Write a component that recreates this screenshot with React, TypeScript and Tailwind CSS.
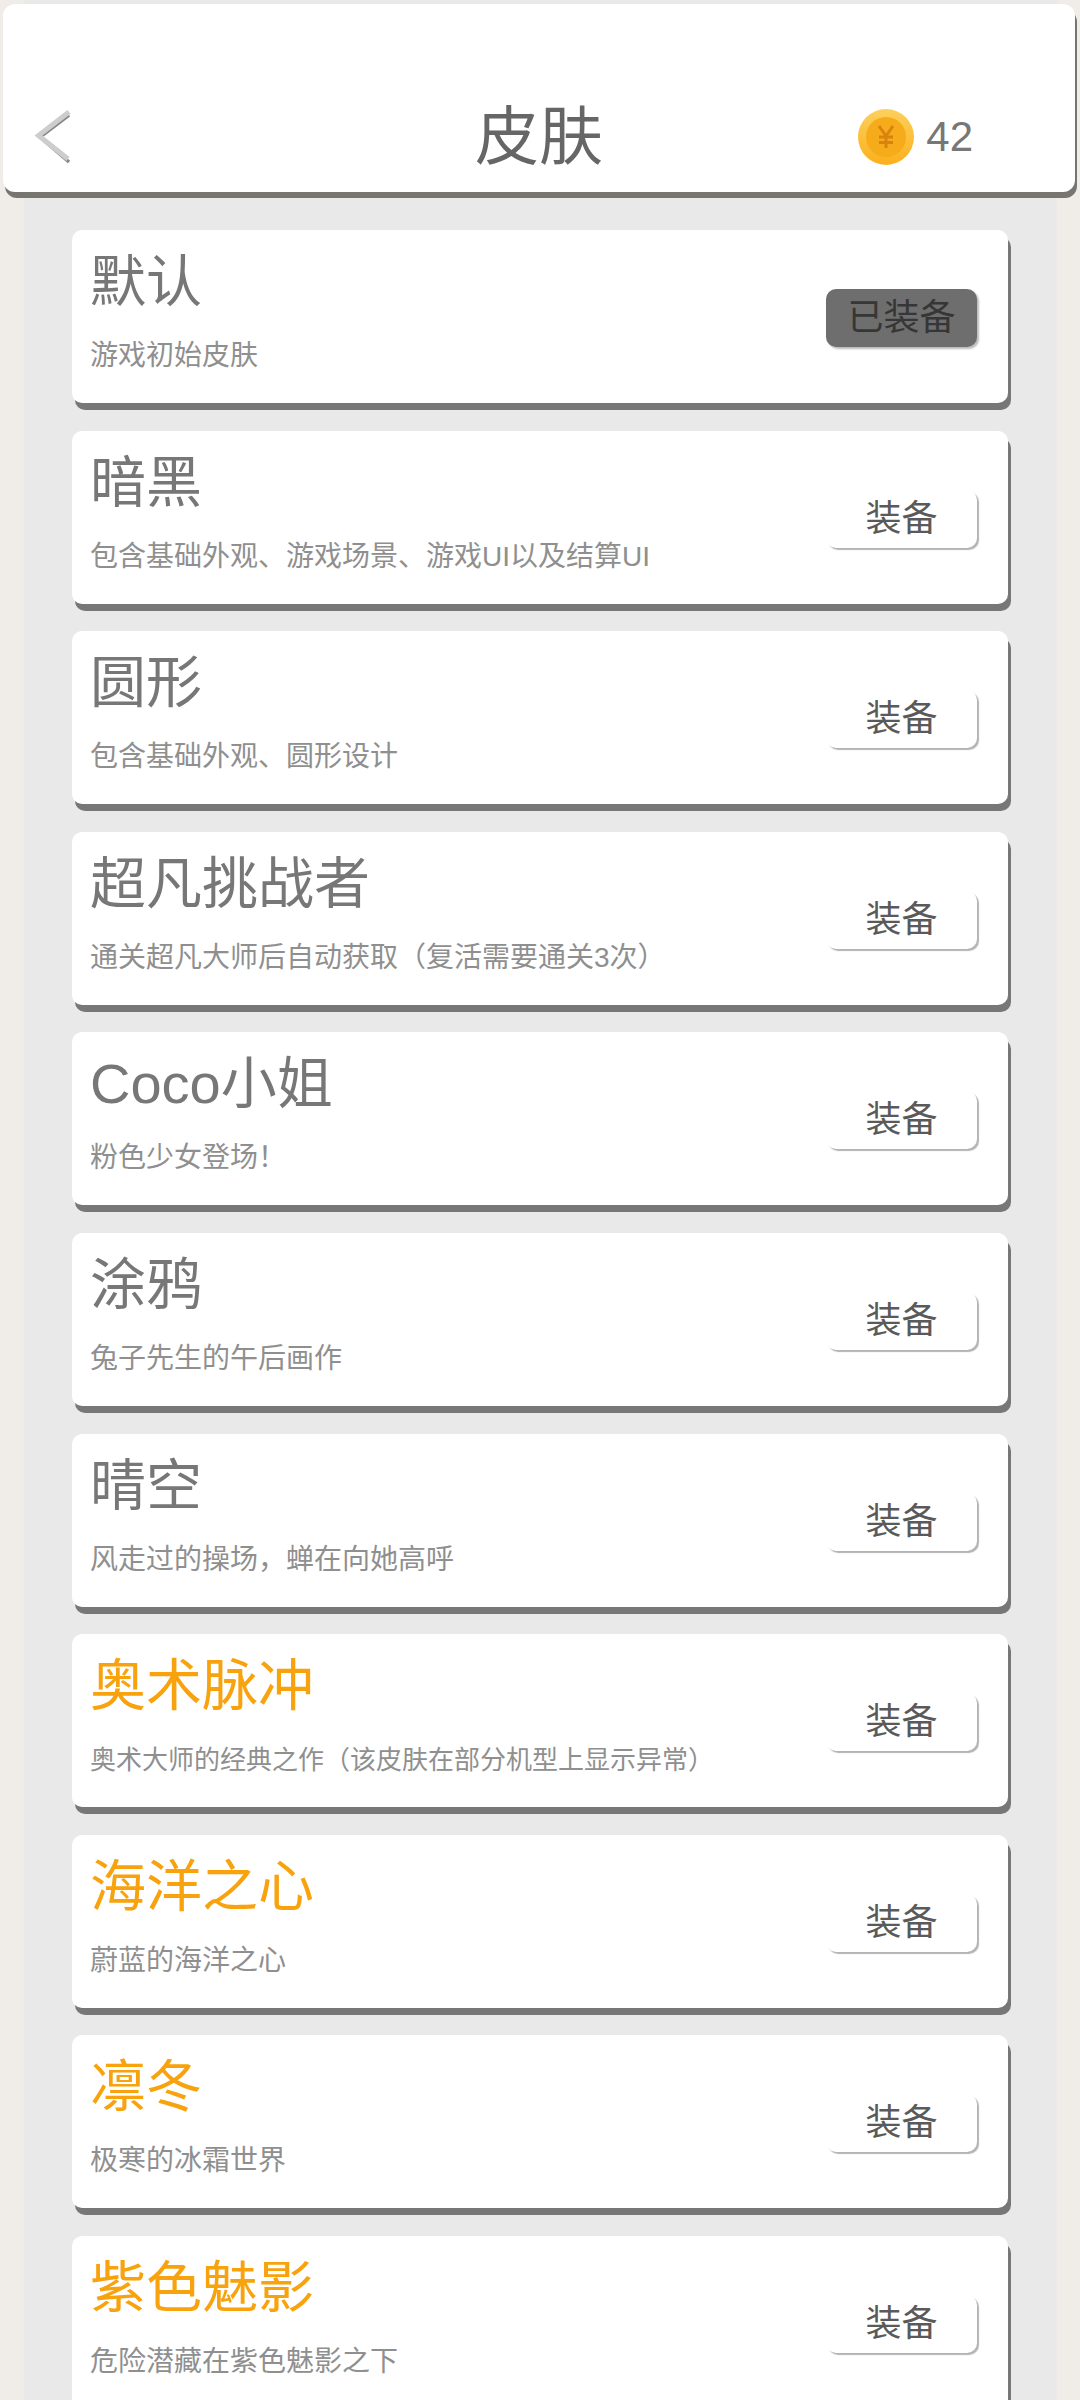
type Skin = { name: string; desc: string; equipped?: boolean; gold?: boolean; small?: boolean };

const skins: Skin[] = [
  { name: "默认", desc: "游戏初始皮肤", equipped: true },
  { name: "暗黑", desc: "包含基础外观、游戏场景、游戏UI以及结算UI" },
  { name: "圆形", desc: "包含基础外观、圆形设计" },
  { name: "超凡挑战者", desc: "通关超凡大师后自动获取（复活需要通关3次）" },
  { name: "Coco小姐", desc: "粉色少女登场！" },
  { name: "涂鸦", desc: "兔子先生的午后画作" },
  { name: "晴空", desc: "风走过的操场，蝉在向她高呼" },
  { name: "奥术脉冲", desc: "奥术大师的经典之作（该皮肤在部分机型上显示异常）", gold: true, small: true },
  { name: "海洋之心", desc: "蔚蓝的海洋之心", gold: true },
  { name: "凛冬", desc: "极寒的冰霜世界", gold: true },
  { name: "紫色魅影", desc: "危险潜藏在紫色魅影之下", gold: true },
];

function Card({ name, desc, equipped, gold, small }: Skin) {
  return (
    <div className="flex h-[173px] shrink-0 items-center justify-between rounded-[10px] bg-white pl-[18px] pr-[31px] shadow-[3px_7px_0_0_#777777]">
      <div className="flex min-w-0 flex-col self-start pt-[17px]">
        <div className={`text-[56px] leading-[70px] ${gold ? "text-[#f8a30e]" : "text-[#777777]"}`}>{name}</div>
        <div className={`mt-[19px] leading-[40px] text-[#8f8f8f] ${small ? "text-[26px]" : "text-[28px]"}`}>{desc}</div>
      </div>
      {equipped ? (
        <div className="mt-[3px] flex h-[58px] w-[151px] items-center justify-center rounded-[10px] bg-[#6e6e6e] text-[36px] leading-none text-[#363636] shadow-[2px_2px_2px_#bbbbbb]">已装备</div>
      ) : (
        <div className="mt-[3px] flex h-[58px] w-[151px] items-center justify-center rounded-[10px] bg-white text-[36px] leading-none text-[#5a5a5a] shadow-[2px_2px_1px_#b4b4b4]">装备</div>
      )}
    </div>
  );
}

export default function App() {
  return (
    <div className="h-[2400px] overflow-hidden bg-[#f0ece8] font-['Liberation_Sans','Noto_Sans_CJK_SC',sans-serif]">
      <div className="ml-[24px] mr-[23px] h-[2400px] bg-[#e9e9e9] pt-[4px]">
        <div className="-ml-[21px] -mr-[18px] grid h-[188px] grid-cols-[1fr_auto_1fr] items-end rounded-[12px] bg-white pb-[15px] shadow-[2px_6px_0_0_#777570]">
          <div className="flex h-[80px] items-center pl-[30px]">
            <svg width="40" height="56" viewBox="0 0 40 56">
              <path d="M36 6 L7 28 L36 53" fill="none" stroke="#858585" strokeWidth="3.5" />
              <path d="M36 3 L5.5 26.5 L35 50" fill="none" stroke="#cdcdcd" strokeWidth="5" />
            </svg>
          </div>
          <div className="text-[64px] leading-[80px] text-[#666666]">皮肤</div>
          <div className="flex h-[80px] items-center justify-end gap-[12px] pr-[102px]">
            <svg width="56" height="56" viewBox="0 0 56 56">
              <defs>
                <linearGradient id="coin" x1="0" y1="0" x2="0" y2="1">
                  <stop offset="0" stopColor="#fdd05c" />
                  <stop offset="1" stopColor="#fbb01c" />
                </linearGradient>
              </defs>
              <circle cx="28" cy="28" r="28" fill="url(#coin)" />
              <circle cx="28" cy="28" r="20" fill="#f6ab1a" />
              <path d="M21 17 L28 27 L35 17 M28 27 V39 M21 28 H35 M21 33.5 H35" fill="none" stroke="#d9830f" strokeWidth="3" />
            </svg>
            <span className="text-[42px] leading-[50px] text-[#777777]">42</span>
          </div>
        </div>
        <div className="ml-[48px] mr-[49px] mt-[38px] flex flex-col gap-[27.6px]">
          {skins.map((s) => (
            <Card key={s.name} {...s} />
          ))}
        </div>
      </div>
    </div>
  );
}
